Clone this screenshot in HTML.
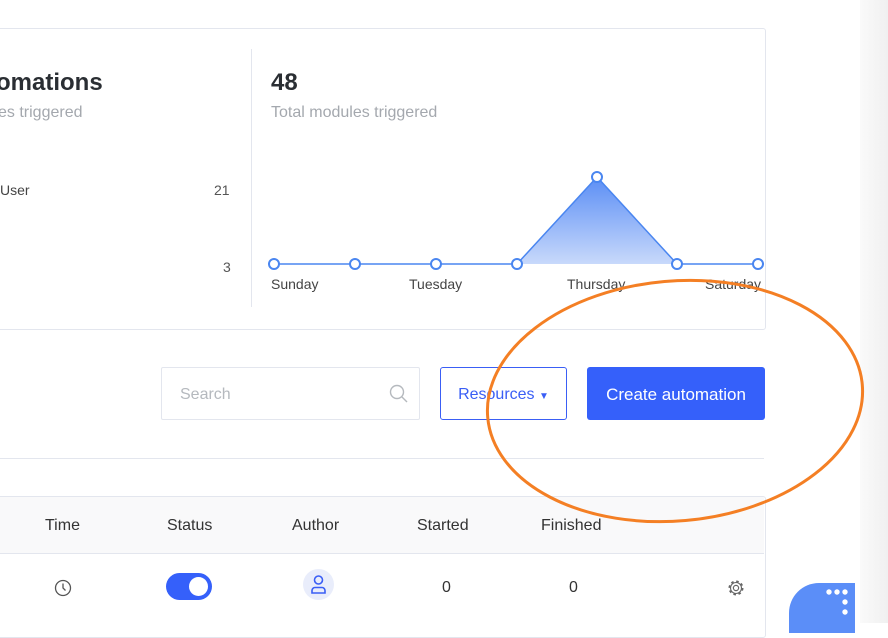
<!DOCTYPE html>
<html><head><style>
body{margin:0;width:888px;height:623px;overflow:hidden;background:#fff;font-family:"Liberation Sans",sans-serif;position:relative}
.a{position:absolute}
.t{color:#333}
</style></head><body>
<div class="a" style="left:860px;top:0;width:28px;height:623px;background:linear-gradient(to right,#fafafa,#f0f0f0)"></div>
<div class="a" style="left:-10px;top:28px;width:774px;height:300px;border:1px solid #e3e6ee;border-radius:3px"></div>
<div class="a" style="left:251px;top:49px;width:1px;height:258px;background:#e3e6ee"></div>
<div class="a" style="left:-4px;top:69px;font-size:24px;font-weight:bold;color:#2a2e33">omations</div>
<div class="a" style="left:-2px;top:104px;font-size:16px;color:#a4a8ae">es triggered</div>
<div class="a" style="left:0;top:182px;font-size:14px;color:#444">User</div>
<div class="a" style="left:214px;top:182px;font-size:14px;color:#555">21</div>
<div class="a" style="left:223px;top:259px;font-size:14px;color:#555">3</div>
<div class="a" style="left:271px;top:69px;font-size:24px;font-weight:bold;color:#2a2e33">48</div>
<div class="a" style="left:271px;top:104px;font-size:16px;color:#a4a8ae">Total modules triggered</div>
<svg class="a" style="left:0;top:0" width="888" height="623">
<defs><linearGradient id="g" x1="0" y1="0" x2="0" y2="1"><stop offset="0" stop-color="#5b8ef5"/><stop offset="1" stop-color="#c8d9fb"/></linearGradient></defs>
<polygon points="517,264 597,177 677,264" fill="url(#g)"/>
<polyline points="274,264 517,264 597,177 677,264 764,264" fill="none" stroke="#4a86f0" stroke-width="1.5"/>
<g fill="#fff" stroke="#4a86f0" stroke-width="2">
<circle cx="274" cy="264" r="5"/><circle cx="355" cy="264" r="5"/><circle cx="436" cy="264" r="5"/><circle cx="517" cy="264" r="5"/><circle cx="597" cy="177" r="5"/><circle cx="677" cy="264" r="5"/><circle cx="758" cy="264" r="5"/></g>
</svg>
<div class="a" style="left:271px;top:276px;font-size:14px;color:#444">Sunday</div>
<div class="a" style="left:409px;top:276px;font-size:14px;color:#444">Tuesday</div>
<div class="a" style="left:567px;top:276px;font-size:14px;color:#444">Thursday</div>
<div class="a" style="left:705px;top:276px;font-size:14px;color:#444">Saturday</div>
<div class="a" style="left:161px;top:367px;width:257px;height:51px;border:1px solid #e3e6ee;border-radius:2px"></div>
<div class="a" style="left:180px;top:386px;font-size:16px;color:#b5b9be">Search</div>
<svg class="a" style="left:389px;top:384px" width="20" height="20"><circle cx="8" cy="8" r="6.5" fill="none" stroke="#b5b9be" stroke-width="1.4"/><line x1="13" y1="13" x2="18" y2="18" stroke="#b5b9be" stroke-width="1.4"/></svg>
<div class="a" style="left:440px;top:367px;width:125px;height:51px;border:1px solid #3a5ef5;border-radius:3px;color:#3a5ef5;font-size:16px;line-height:53px;text-align:center">Resources <span style="font-size:10px">&#9660;</span></div>
<div class="a" style="left:587px;top:367px;width:178px;height:53px;background:#3560fa;border-radius:3px;color:#fff;font-size:17px;line-height:55px;text-align:center">Create automation</div>
<div class="a" style="left:0;top:458px;width:764px;height:1px;background:#e3e6ee"></div>
<div class="a" style="left:-10px;top:496px;width:774px;height:140px;border:1px solid #e3e6ee;border-radius:3px"></div>
<div class="a" style="left:-9px;top:497px;width:773px;height:56px;background:#f9f9fa;border-bottom:1px solid #e3e6ee"></div>
<div class="a t" style="left:45px;top:517px;font-size:16px">Time</div>
<div class="a t" style="left:167px;top:517px;font-size:16px">Status</div>
<div class="a t" style="left:292px;top:517px;font-size:16px">Author</div>
<div class="a t" style="left:417px;top:517px;font-size:16px">Started</div>
<div class="a t" style="left:541px;top:517px;font-size:16px">Finished</div>
<svg class="a" style="left:54px;top:579px" width="18" height="18"><circle cx="9" cy="9" r="7.5" fill="none" stroke="#555" stroke-width="1.3"/><path d="M9 4.5V9l2.5 2.5" fill="none" stroke="#555" stroke-width="1.3"/></svg>
<div class="a" style="left:166px;top:573px;width:46px;height:27px;background:#3560fa;border-radius:14px"><div style="position:absolute;right:4px;top:4px;width:19px;height:19px;border-radius:50%;background:#fff"></div></div>
<div class="a" style="left:303px;top:569px;width:31px;height:31px;border-radius:50%;background:#e9edfb"></div>
<svg class="a" style="left:303px;top:569px" width="31" height="31"><circle cx="15.5" cy="11" r="4" fill="none" stroke="#3a5ef5" stroke-width="1.6"/><path d="M9 24v-2.5a3 3 0 0 1 3-3h7a3 3 0 0 1 3 3V24z" fill="none" stroke="#3a5ef5" stroke-width="1.6"/></svg>
<div class="a t" style="left:442px;top:579px;font-size:16px">0</div>
<div class="a t" style="left:569px;top:579px;font-size:16px">0</div>
<svg class="a" style="left:726px;top:578px" width="20" height="20"><circle cx="10" cy="10" r="2.6" fill="none" stroke="#666" stroke-width="1.2"/><circle cx="10" cy="10" r="6.5" fill="none" stroke="#666" stroke-width="2" stroke-dasharray="2.5 2.6"/><circle cx="10" cy="10" r="5.5" fill="none" stroke="#666" stroke-width="1.1"/></svg>
<div class="a" style="left:789px;top:583px;width:66px;height:50px;background:#5b8ef8;border-radius:30px 0 0 0"></div>
<svg class="a" style="left:820px;top:585px" width="40" height="38" fill="#fff"><circle cx="9" cy="7" r="2.7"/><circle cx="17" cy="7" r="2.7"/><circle cx="25" cy="7" r="2.7"/><circle cx="25" cy="17" r="2.7"/><circle cx="25" cy="27" r="2.7"/></svg>
<svg class="a" style="left:0;top:0" width="888" height="623"><ellipse cx="675" cy="401" rx="188" ry="120" transform="rotate(-5 675 401)" fill="none" stroke="#f47f24" stroke-width="3"/></svg>
</body></html>
